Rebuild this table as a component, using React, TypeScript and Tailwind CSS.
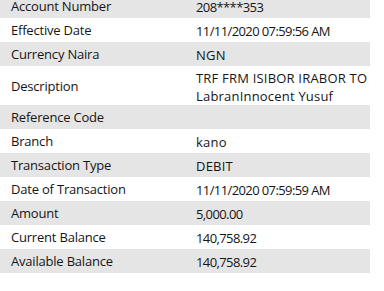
const rows: { label: string; value: React.ReactNode; tall?: boolean; num?: boolean }[] = [
  { label: 'Account Number', value: '208****353', num: true },
  { label: 'Effective Date', value: '11/11/2020 07:59:56 AM', num: true },
  { label: 'Currency Naira', value: 'NGN' },
  {
    label: 'Description',
    value: (
      <>
        TRF FRM ISIBOR IRABOR TO
        <br />
        LabranInnocent Yusuf
      </>
    ),
    tall: true,
  },
  { label: 'Reference Code', value: '' },
  { label: 'Branch', value: 'kano' },
  { label: 'Transaction Type', value: 'DEBIT' },
  { label: 'Date of Transaction', value: '11/11/2020 07:59:59 AM', num: true },
  { label: 'Amount', value: '5,000.00', num: true },
  { label: 'Current Balance', value: '140,758.92', num: true },
  { label: 'Available Balance', value: '140,758.92', num: true },
];

export default function App() {
  return (
    <div className="w-[384px] h-[291px] overflow-hidden bg-white font-['Open_Sans',sans-serif] text-[13px] text-[#151515]">
      <div className="w-[370px] -mt-[6px]">
        {rows.map((row, i) => (
          <div
            key={row.label}
            className={`flex items-center ${row.tall ? 'h-[39px]' : 'h-[24px]'} ${
              i % 2 === 0 ? 'bg-[#e5e5e5]' : 'bg-white'
            }`}
          >
            <div className="w-[186px] pl-[11px] pt-[2px] tracking-[-0.2px]">{row.label}</div>
            <div
              className={`flex-1 pl-[10px] pt-[2px] leading-[18px] ${
                row.num ? 'tracking-[-0.6px]' : 'tracking-[0.2px]'
              }`}
            >
              {row.value}
            </div>
          </div>
        ))}
      </div>
    </div>
  );
}
